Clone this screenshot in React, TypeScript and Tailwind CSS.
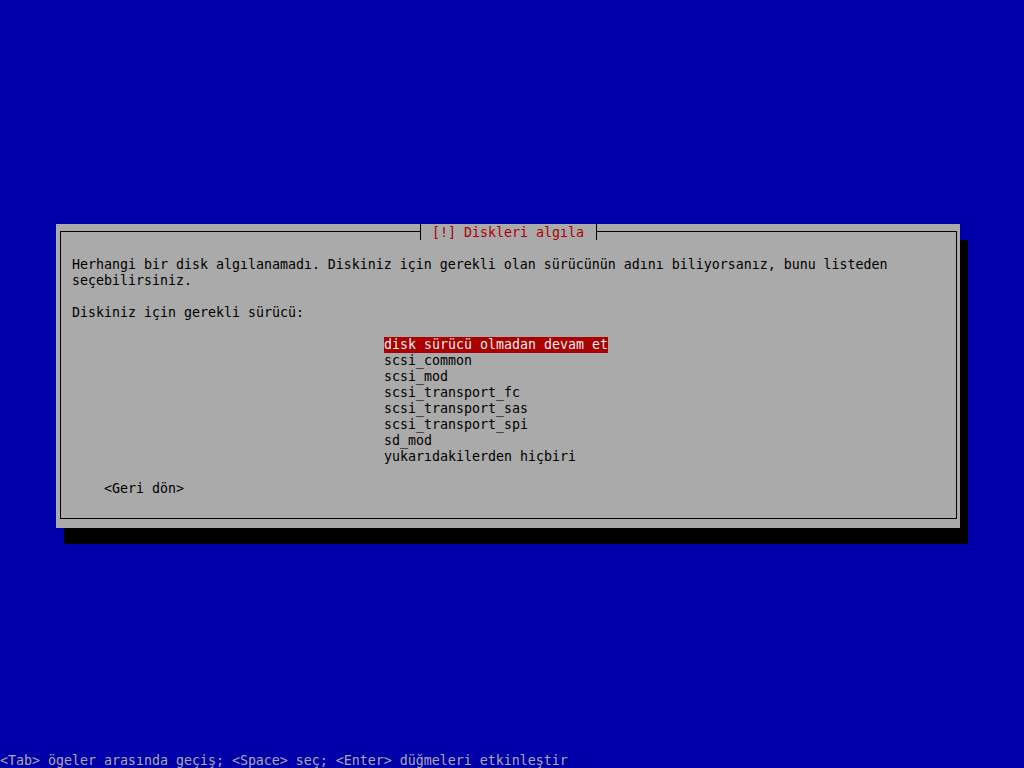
import React from 'react';

const mono = { fontFamily: '"DejaVu Sans Mono", "Liberation Mono", monospace' };

const drivers = [
  'scsi_common',
  'scsi_mod',
  'scsi_transport_fc',
  'scsi_transport_sas',
  'scsi_transport_spi',
  'sd_mod',
  'yukarıdakilerden hiçbiri',
];

export default function App() {
  return (
    <div
      className="w-[1024px] h-[768px] bg-[#0000aa] flex flex-col text-[13.29px] leading-4 whitespace-pre overflow-hidden"
      style={mono}
    >
      <div className="pt-[224px] pl-[56px]">
        {/* dialog */}
        <div className="relative w-[904px] h-[304px] bg-[#aaaaaa] shadow-[8px_16px_0_#000] flex">
          <div className="mt-[7px] ml-[4px] mr-[3px] mb-[9px] flex-1 border border-black pt-[25px] pl-[11px] text-black">
            <div>Herhangi bir disk algılanamadı. Diskiniz için gerekli olan sürücünün adını biliyorsanız, bunu listeden</div>
            <div>seçebilirsiniz.</div>
            <div className="h-4" />
            <div>Diskiniz için gerekli sürücü:</div>
            <div className="h-4" />
            <div className="pl-[312px] flex flex-col items-start">
              <div className="bg-[#aa0000] text-[#eeeeee]">disk sürücü olmadan devam et</div>
              {drivers.map((d) => (
                <div key={d}>{d}</div>
              ))}
            </div>
            <div className="h-4" />
            <div className="pl-[32px]">&lt;Geri dön&gt;</div>
          </div>

          {/* title sits on the top frame line */}
          <div className="absolute top-0 left-[360px] h-4 flex bg-[#aaaaaa]">
            <div className="w-[4px] h-4 flex flex-col">
              <div className="h-[7px]" />
              <div className="h-px bg-black" />
            </div>
            <div className="h-4 border-l border-r border-black pl-[3px] pr-[4px] pt-px text-[#aa0000]"> [!] Diskleri algıla </div>
            <div className="w-[3px] h-4 flex flex-col">
              <div className="h-[7px]" />
              <div className="h-px bg-black" />
            </div>
          </div>
        </div>
      </div>

      <div className="mt-auto h-4 pt-px text-[#aaaaaa]">&lt;Tab&gt; ögeler arasında geçiş; &lt;Space&gt; seç; &lt;Enter&gt; düğmeleri etkinleştir</div>
    </div>
  );
}
